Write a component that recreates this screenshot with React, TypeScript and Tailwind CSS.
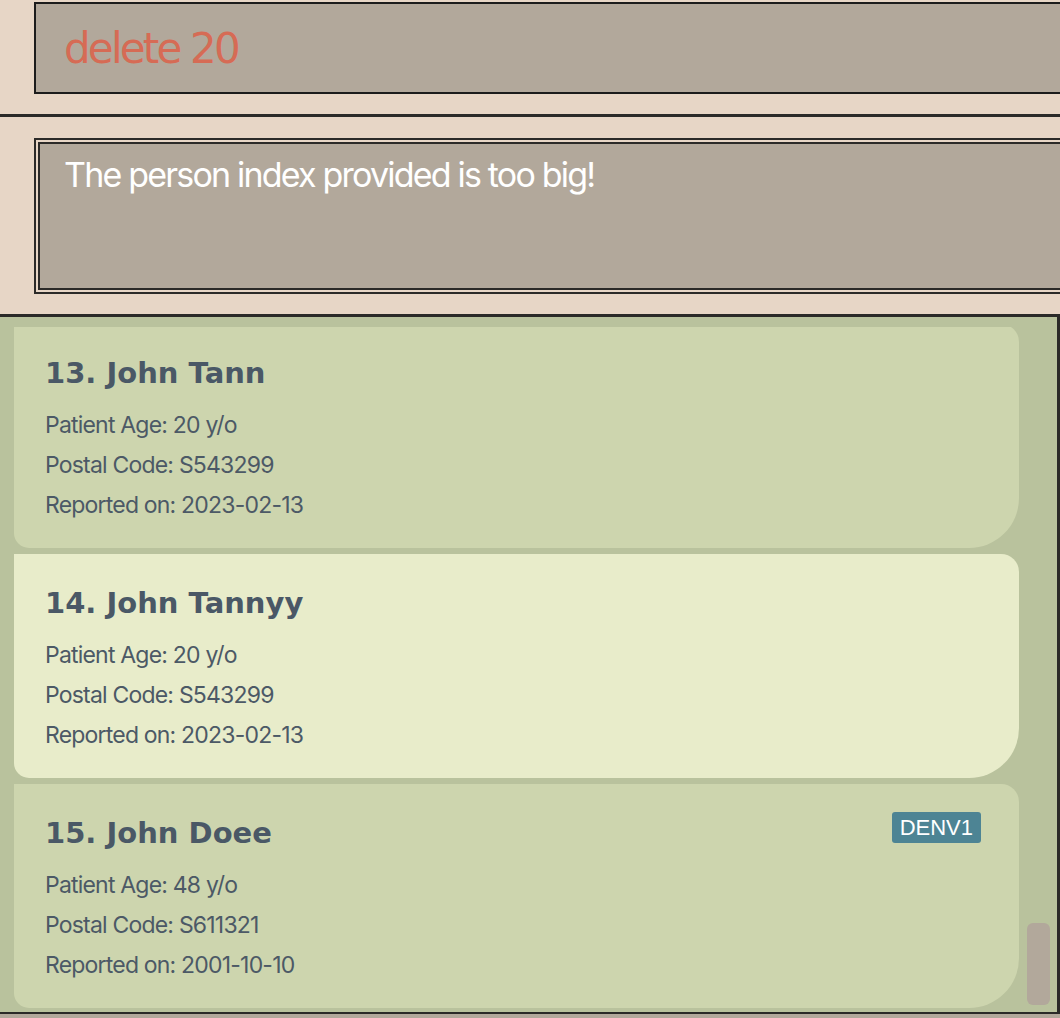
import React from "react";

const people = [
  { idx: 13, name: "John Tann", age: 20, postal: "S543299", date: "2023-02-13", selected: false, tag: "" },
  { idx: 14, name: "John Tannyy", age: 20, postal: "S543299", date: "2023-02-13", selected: true, tag: "" },
  { idx: 15, name: "John Doee", age: 48, postal: "S611321", date: "2001-10-10", selected: false, tag: "DENV1" },
];

function Card({ p }: { p: (typeof people)[number] }) {
  return (
    <div
      className={`relative flex-none h-[224px] rounded-tr-[18px] rounded-br-[50px] rounded-bl-[15px] pl-[31px] pt-[32px] ${
        p.selected ? "bg-[#e8ecca]" : "bg-[#cdd5ae]"
      }`}
    >
      <div className="font-['DejaVu_Sans',sans-serif] font-bold text-[29px] leading-[34px] text-[#4a5866]">
        {p.idx}. {p.name}
      </div>
      <div className="mt-[15px] font-['Inter',sans-serif] text-[23px] leading-[40px] tracking-[-0.8px] text-[#4c5966]">
        <div>Patient Age: {p.age} y/o</div>
        <div>Postal Code: {p.postal}</div>
        <div>Reported on: {p.date}</div>
      </div>
      {p.tag && (
        <div className="absolute right-[38px] top-[28px] h-[31px] px-[8px] rounded-[3px] bg-[#4d8494] text-white font-['Liberation_Sans',sans-serif] text-[22px] leading-[31px]">
          {p.tag}
        </div>
      )}
    </div>
  );
}

export default function App() {
  return (
    <div className="w-[1060px] h-[1018px] overflow-hidden bg-[#e7d6c6] flex flex-col">
      <div className="flex-none h-[114px] pt-[2px] pl-[34px]">
        <div className="w-[1060px] h-[92px] border-2 border-[#1c1c1c] bg-[#b2a89b] pl-[28px] pt-[21px]">
          <div className="font-['DejaVu_Sans',sans-serif] text-[42px] leading-[48px] tracking-[-2.8px] text-[#d66b55]">
            delete 20
          </div>
        </div>
      </div>
      <div className="flex-none h-[3px] bg-[#2b2a28]" />
      <div className="flex-none h-[197px] pt-[21px] pl-[34px]">
        <div className="w-[1060px] h-[156px] border-[6px] border-double border-[#2b2a28] bg-clip-padding bg-[#b2a89b] pl-[24px] pt-[10px]">
          <div className="font-['Inter',sans-serif] text-[34px] leading-[42px] tracking-[-1.8px] text-white">
            The person index provided is too big!
          </div>
        </div>
      </div>
      <div className="flex-none h-[3px] bg-[#2b2a28]" />
      <div className="relative flex-none h-[697px] bg-[#b9c29d] border-r-[3px] border-b-2 border-[#2b2a28] pt-[10px] pl-[14px]">
        <div className="w-[1005px] h-[685px] overflow-hidden">
          <div className="-mt-[3px] flex flex-col gap-[6px]">
            {people.map((p) => (
              <Card key={p.idx} p={p} />
            ))}
          </div>
        </div>
        <div className="absolute left-[1027px] top-[606px] w-[23px] h-[82px] rounded-[6px] bg-[#b2a89b]" />
      </div>
      <div className="flex-1 bg-[#b2a89b]" />
    </div>
  );
}
